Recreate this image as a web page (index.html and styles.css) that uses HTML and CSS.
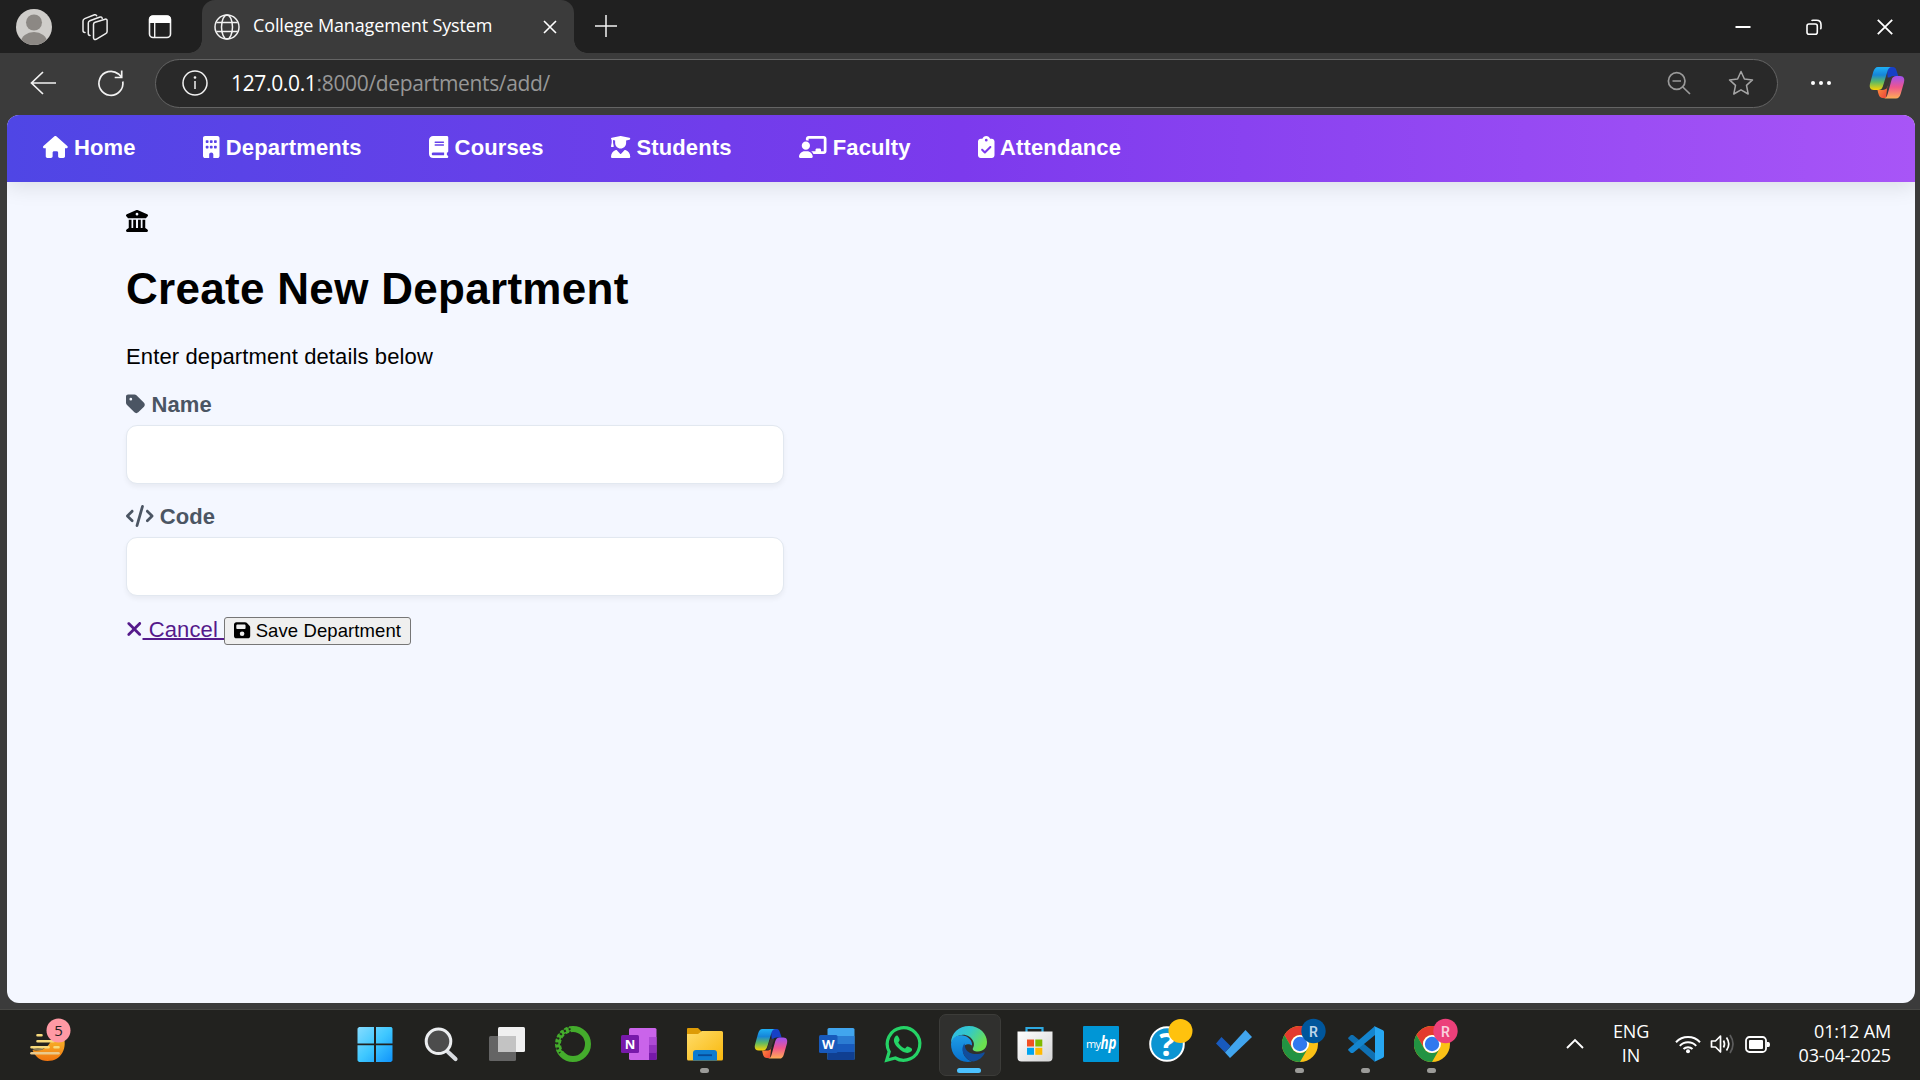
FILE: index.html
```html
<!DOCTYPE html>
<html lang="en">
<head>
<meta charset="utf-8">
<title>College Management System</title>
<link rel="stylesheet" href="styles.css">
</head>
<body>
<svg class="defs" aria-hidden="true">
  <defs>
    <linearGradient id="cpBlue" x1="0" y1="0" x2="0" y2="1"><stop offset="0" stop-color="#1fb0f5"/><stop offset=".35" stop-color="#1685d8"/><stop offset=".65" stop-color="#5fba62"/><stop offset="1" stop-color="#fcd303"/></linearGradient>
    <linearGradient id="cpPink" x1="0" y1="0" x2="0" y2="1"><stop offset="0" stop-color="#9d51f2"/><stop offset=".5" stop-color="#f0568d"/><stop offset="1" stop-color="#ffae55"/></linearGradient>
    <linearGradient id="cpOrange" x1="0" y1="0" x2="1" y2="1"><stop offset="0" stop-color="#ff9a3c"/><stop offset="1" stop-color="#ee3e3a"/></linearGradient>
    <linearGradient id="win" x1="0" y1="0" x2="1" y2="1"><stop offset="0" stop-color="#86dcff"/><stop offset=".5" stop-color="#3fc8ff"/><stop offset="1" stop-color="#0f93fb"/></linearGradient>
    <linearGradient id="folder" x1="0" y1="0" x2="1" y2="1"><stop offset="0" stop-color="#ffdc6a"/><stop offset="1" stop-color="#f9b80c"/></linearGradient>
    <linearGradient id="edgeTop" x1="0" y1="0" x2="1" y2=".5"><stop offset="0" stop-color="#2fb6ee"/><stop offset=".5" stop-color="#34c9c8"/><stop offset="1" stop-color="#6be04f"/></linearGradient>
    <linearGradient id="edgeLeft" x1="0" y1="0" x2="0" y2="1"><stop offset="0" stop-color="#1e9de6"/><stop offset="1" stop-color="#0870cc"/></linearGradient>
    <linearGradient id="sun" x1="0" y1="0" x2="0" y2="1"><stop offset="0" stop-color="#f9c02f"/><stop offset="1" stop-color="#f1750f"/></linearGradient>
    <linearGradient id="bag" x1="0" y1="0" x2="1" y2="1"><stop offset="0" stop-color="#fff"/><stop offset="1" stop-color="#d5d5d5"/></linearGradient>
    <symbol id="copilot" viewBox="0 0 36 34">
      <path d="M18 1h5c4 0 4 2 5.300 6l1 3h-4c-4 0-5.500 1.500-6.500 5z" fill="#1740c6"/>
      <path d="M17 32h-2c-4 0-5-2-5.800-5L8.500 24h4c4 0 5-1 6-5z" fill="url(#cpOrange)"/>
      <path d="M9 1h14c-3 0-4 2-4.800 5L14 20c-1 3-2.500 4-5 4H5c-4 0-5-3-3.800-7l3-11C5.200 3 6.500 1 9 1z" fill="url(#cpBlue)"/>
      <path d="M27 32.500H14c3 0 4-2 4.800-5L22.500 14c1-3 2.500-4 5-4H31c4 0 5 3 3.800 7l-3 10.500C30.800 31 29.500 32.500 27 32.500z" fill="url(#cpPink)"/>
      <path d="M17.500 11.500h4.200l-4.400 11.500h-4z" fill="#3a3733"/>
    </symbol>
    <symbol id="chrome" viewBox="0 0 36 36">
      <circle cx="18" cy="18" r="18" fill="#fbc116"/>
      <path d="M2.400 9A18 18 0 0 1 33.600 9H18a9 9 0 0 0-7.800 13.500z" fill="#e33b2e"/>
      <path d="M2.400 9A18 18 0 0 0 18 36l7.800-13.500A9 9 0 0 1 10.200 22.500z" fill="#229342"/>
      <circle cx="18" cy="18" r="9" fill="#fff"/><circle cx="18" cy="18" r="7.200" fill="#3079ee"/>
    </symbol>
  </defs>
</svg>

<header class="tabstrip">
  <div class="strip-tools">
    <svg class="avatar" viewBox="0 0 36 44"><clipPath id="av"><ellipse cx="18" cy="22" rx="18" ry="18"/></clipPath><g clip-path="url(#av)"><path d="M0 0h36v44H0z" fill="#cfcdca"/><circle cx="18" cy="17.500" r="8" fill="#8c8884"/><ellipse cx="18" cy="37" rx="13" ry="10" fill="#8c8884"/></g></svg>
    <svg class="strip-icon" viewBox="0 0 28 28" fill="none" stroke="#ededed" stroke-width="1.500" stroke-linejoin="round" stroke-linecap="round"><path d="M11.500 11.500c0-1.200.5-1.800 1.600-2.200l10-3.100c1.200-.4 2 .2 2 1.400v11c0 1-.5 1.700-1.400 2l-9.600 5.700c-1.400.6-2.600 0-2.600-1.600z"/><path d="M8 22.500c-1.200 0-1.700-.8-1.700-1.900V10c0-1.200.5-1.900 1.600-2.300L18 4c1.200-.3 2 .3 2.200 1.500"/><path d="M3 19.500C1.800 19.500 1 18.700 1 17.500V8c0-1.200.6-2 1.700-2.400L12.500 1.800c1-.3 1.800 0 2.200 1"/></svg>
    <svg class="strip-icon" viewBox="0 0 28 28"><rect x="3.500" y="3" width="21" height="21.500" rx="3.500" fill="none" stroke="#f2f2f2" stroke-width="1.600"/><path d="M3 10V6.500C3 4 4.500 2.500 7 2.500h14c2.500 0 4 1.500 4 4V10z" fill="#fff"/><path d="M8.700 10v14" stroke="#f2f2f2" stroke-width="1.400"/></svg>
  </div>
  <div class="tab">
    <svg class="globe" viewBox="0 0 26 26" fill="none" stroke="#f2f2f2" stroke-width="1.500"><circle cx="13" cy="13" r="12"/><ellipse cx="13" cy="13" rx="5.500" ry="12"/><path d="M2.500 8.500h21M2.500 17.500h21"/></svg>
    <span class="tab-title">College Management System</span>
    <svg class="tab-close" viewBox="0 0 14 14" stroke="#fff" stroke-width="1.600"><path d="M1 1l12 12M13 1L1 13"/></svg>
  </div>
  <svg class="newtab" viewBox="0 0 22 22" stroke="#f2f2f2" stroke-width="1.500"><path d="M11 0v22M0 11h22"/></svg>
  <div class="window-controls">
    <svg viewBox="0 0 16 16" stroke="#fff" stroke-width="2"><path d="M.5 8h15"/></svg>
    <svg viewBox="0 0 16 16" fill="none" stroke="#fff" stroke-width="1.600"><rect x="1" y="5" width="10.300" height="10.200" rx="2"/><path d="M5.500 1.800Q6 1.200 7 1.200h3.500c3 0 4.500 1.500 4.500 4.500v3q0 1-.7 1.500"/></svg>
    <svg viewBox="0 0 16 16" stroke="#fff" stroke-width="1.800"><path d="M.8.800l14.400 14.400M15.200.8L.8 15.200"/></svg>
  </div>
</header>

<div class="toolbar">
  <svg class="nav-icon" viewBox="0 0 28 28" fill="none" stroke="#f2f2f2" stroke-width="1.700"><path d="M27 14H2.500M14 3L2.500 14 14 25"/></svg>
  <svg class="nav-icon" viewBox="0 0 28 28" fill="none" stroke="#f2f2f2" stroke-width="1.700"><path d="M25.800 12.500A12 12 0 1 1 21.500 5l3 3M24.700 1.500v7h-7"/></svg>
  <div class="address">
    <svg class="info" viewBox="0 0 26 26" fill="none" stroke="#f2f2f2" stroke-width="1.500"><circle cx="13" cy="13" r="12"/><path d="M13 11v8"/><circle cx="13" cy="7.500" r=".6" fill="#fff"/></svg>
    <span class="url"><b>127.0.0.1</b>:8000/departments/add/</span>
    <svg class="zoom-out" viewBox="0 0 24 24" fill="none" stroke="#9a9a9a" stroke-width="1.700"><circle cx="9.700" cy="10" r="8.300"/><path d="M15.800 16l7.200 7M5.500 10h8.500"/></svg>
    <svg class="star" viewBox="0 0 26 26" fill="none" stroke="#a5a5a5" stroke-width="1.500" stroke-linejoin="round"><path d="M13 1.500l3.400 7.500 8.100.9-6 5.500 1.700 8.600L13 19.800 5.800 24l1.700-8.600-6-5.500 8.100-.9z"/></svg>
  </div>
  <svg class="more" viewBox="0 0 20 4" fill="#fff"><circle cx="2" cy="2" r="2"/><circle cx="10" cy="2" r="2"/><circle cx="18" cy="2" r="2"/></svg>
  <svg class="copilot-button"><use href="#copilot"/></svg>
</div>

<div class="viewport">
<div class="page">
  <nav class="navbar">
    <a class="nav-link"><svg class="fa" style="--w:576" viewBox="0 0 576 512"><path d="M575.800 255.500c0 18-15 32.100-32 32.100l-32 0 .7 160.200c0 2.700-.2 5.400-.5 8.100l0 16.200c0 22.100-17.900 40-40 40l-16 0c-1.100 0-2.200 0-3.300-.1c-1.400 .1-2.800 .1-4.200 .1L416 512l-24 0c-22.100 0-40-17.900-40-40l0-24 0-64c0-17.700-14.300-32-32-32l-64 0c-17.700 0-32 14.300-32 32l0 64 0 24c0 22.100-17.900 40-40 40l-24 0-31.900 0c-1.500 0-3-.1-4.500-.2c-1.200 .1-2.400 .2-3.600 .2l-16 0c-22.100 0-40-17.900-40-40l0-112c0-.9 0-1.900 .1-2.800l0-69.700-32 0c-18 0-32-14-32-32.100c0-9 3-17 10-24L266.400 8c7-7 15-8 22-8s15 2 21 7L564.800 231.500c8 7 12 15 11 24z"/></svg> Home</a>
    <a class="nav-link"><svg class="fa" style="--w:384" viewBox="0 0 384 512"><path fill-rule="evenodd" d="M48 0C21.500 0 0 21.500 0 48L0 464c0 26.500 21.500 48 48 48l96 0 0-80c0-26.500 21.500-48 48-48s48 21.500 48 48l0 80 96 0c26.500 0 48-21.500 48-48l0-416c0-26.500-21.500-48-48-48L48 0zM80 96h32q16 0 16 16v32q0 16-16 16H80q-16 0-16-16v-32q0-16 16-16zm96 0h32q16 0 16 16v32q0 16-16 16h-32q-16 0-16-16v-32q0-16 16-16zm96 0h32q16 0 16 16v32q0 16-16 16h-32q-16 0-16-16v-32q0-16 16-16zM80 224h32q16 0 16 16v32q0 16-16 16H80q-16 0-16-16v-32q0-16 16-16zm96 0h32q16 0 16 16v32q0 16-16 16h-32q-16 0-16-16v-32q0-16 16-16zm96 0h32q16 0 16 16v32q0 16-16 16h-32q-16 0-16-16v-32q0-16 16-16z"/></svg> Departments</a>
    <a class="nav-link"><svg class="fa" style="--w:448" viewBox="0 0 448 512"><path d="M96 0C43 0 0 43 0 96L0 416c0 53 43 96 96 96l288 0 32 0c17.700 0 32-14.300 32-32s-14.300-32-32-32l0-64c17.700 0 32-14.300 32-32l0-320c0-17.700-14.300-32-32-32L384 0 96 0zm0 384l256 0 0 64L96 448c-17.700 0-32-14.300-32-32s14.300-32 32-32zm32-240c0-8.800 7.200-16 16-16l192 0c8.800 0 16 7.200 16 16s-7.200 16-16 16l-192 0c-8.800 0-16-7.200-16-16zm16 48l192 0c8.800 0 16 7.200 16 16s-7.200 16-16 16l-192 0c-8.800 0-16-7.200-16-16s7.200-16 16-16z"/></svg> Courses</a>
    <a class="nav-link"><svg class="fa" style="--w:448" viewBox="0 0 448 512"><path d="M219.300 .5c3.100-.6 6.300-.6 9.400 0l200 40C439.900 42.700 448 52.600 448 64s-8.100 21.300-19.300 23.500L352 102.900l0 57.100c0 70.700-57.300 128-128 128s-128-57.300-128-128l0-57.100L48 93.300l0 65.100 15.700 78.400c.9 4.700-.3 9.600-3.300 13.300s-7.600 5.900-12.400 5.900l-32 0c-4.800 0-9.300-2.100-12.400-5.900s-4.300-8.600-3.300-13.300L16 158.400l0-71.800C6.500 83.300 0 74.300 0 64C0 52.600 8.100 42.700 19.300 40.500l200-40zM111.900 327.700c10.500-3.400 21.800 .4 29.400 8.500l71 75.500c6.300 6.700 17 6.700 23.300 0l71-75.500c7.600-8.100 18.900-11.900 29.400-8.500C401 348.600 448 409.400 448 481.300c0 17-13.800 30.700-30.700 30.700L30.700 512C13.800 512 0 498.200 0 481.300c0-71.900 47-132.700 111.900-153.600z"/></svg> Students</a>
    <a class="nav-link"><svg class="fa" style="--w:640" viewBox="0 0 640 512"><path d="M160 64c0-35.300 28.700-64 64-64L576 0c35.300 0 64 28.700 64 64l0 288c0 35.300-28.700 64-64 64l-239.200 0c-11.800-25.500-29.900-47.500-52.400-64l99.600 0 0-32c0-17.700 14.300-32 32-32l64 0c17.700 0 32 14.300 32 32l0 32 64 0 0-288L224 64l0 49.100C205.200 102.200 183.300 96 160 96l0-32zm0 64a96 96 0 1 1 0 192 96 96 0 1 1 0-192zM133.300 352l53.300 0C260.300 352 320 411.700 320 485.300c0 14.700-11.900 26.700-26.700 26.700L26.700 512C11.900 512 0 500.100 0 485.300C0 411.700 59.700 352 133.300 352z"/></svg> Faculty</a>
    <a class="nav-link"><svg class="fa" style="--w:384" viewBox="0 0 384 512"><path d="M192 0c-41.800 0-77.400 26.700-90.500 64L64 64C28.700 64 0 92.700 0 128L0 448c0 35.300 28.700 64 64 64l256 0c35.300 0 64-28.700 64-64l0-320c0-35.300-28.700-64-64-64l-37.500 0C269.400 26.700 233.800 0 192 0zm0 64a32 32 0 1 1 0 64 32 32 0 1 1 0-64zM305 273L177 401c-9.400 9.400-24.600 9.400-33.900 0L79 337c-9.400-9.400-9.400-24.600 0-33.900s24.600-9.400 33.900 0l47 47L271 239c9.400-9.400 24.600-9.400 33.900 0s9.400 24.600 0 33.900z"/></svg> Attendance</a>
  </nav>
  <main class="content">
    <div class="crest"><svg class="fa" style="--w:512" viewBox="0 0 512 512"><path d="M243.400 2.600l-224 96c-14 6-21.800 21-18.700 35.800S16.800 160 32 160l0 8c0 13.300 10.700 24 24 24l400 0c13.300 0 24-10.700 24-24l0-8c15.200 0 28.300-10.700 31.300-25.600s-4.800-29.900-18.700-35.800l-224-96c-8-3.400-17.200-3.400-25.200 0zM128 224l-64 0 0 196.300c-.6 .3-1.200 .7-1.800 1.100l-48 32c-11.700 7.800-17 22.400-12.900 35.900S17.900 512 32 512l448 0c14.100 0 26.500-9.200 30.600-22.700s-1.100-28.100-12.900-35.900l-48-32c-.6-.4-1.200-.7-1.800-1.100L448 224l-64 0 0 192-40 0 0-192-64 0 0 192-48 0 0-192-64 0 0 192-40 0 0-192zM256 64a32 32 0 1 1 0 64 32 32 0 1 1 0-64z"/></svg></div>
    <h1>Create New Department</h1>
    <p class="lead">Enter department details below</p>
    <form>
      <label><svg class="fa" style="--w:448" viewBox="0 0 448 512"><path d="M0 80L0 229.500c0 17 6.700 33.300 18.700 45.300l176 176c25 25 65.500 25 90.500 0L418.700 317.300c25-25 25-65.500 0-90.500l-176-176c-12-12-28.300-18.700-45.300-18.700L48 32C21.500 32 0 53.500 0 80zm112 32a32 32 0 1 1 0 64 32 32 0 1 1 0-64z"/></svg> Name</label>
      <input type="text">
      <label><svg class="fa" style="--w:640" viewBox="0 0 640 512"><path d="M392.800 1.200c-17-4.900-34.700 5-39.600 22l-128 448c-4.900 17 5 34.700 22 39.600s34.700-5 39.600-22l128-448c4.900-17-5-34.700-22-39.600zm80.600 120.100c-12.500 12.500-12.500 32.800 0 45.300L562.700 256l-89.400 89.400c-12.500 12.500-12.500 32.800 0 45.300s32.800 12.500 45.300 0l112-112c12.500-12.500 12.500-32.800 0-45.300l-112-112c-12.500-12.500-32.800-12.500-45.300 0zm-306.700 0c-12.500-12.500-32.800-12.500-45.300 0l-112 112c-12.500 12.500-12.500 32.800 0 45.300l112 112c12.500 12.500 32.800 12.500 45.300 0s12.500-32.800 0-45.300L77.300 256l89.400-89.400c12.500-12.500 12.500-32.800 0-45.300z"/></svg> Code</label>
      <input type="text">
      <div class="actions">
        <a class="cancel"><svg class="fa" style="--w:384" viewBox="0 0 384 512"><path d="M342.600 150.600c12.500-12.500 12.500-32.800 0-45.300s-32.800-12.500-45.300 0L192 210.700 86.600 105.400c-12.500-12.500-32.800-12.500-45.300 0s-12.500 32.800 0 45.300L146.700 256 41.400 361.400c-12.500 12.500-12.500 32.800 0 45.300s32.800 12.500 45.300 0L192 301.300 297.400 406.600c12.500 12.500 32.800 12.500 45.300 0s12.500-32.800 0-45.300L237.300 256 342.600 150.600z"/></svg><span class="cancel-text"> Cancel </span></a><button type="button"><svg class="fa" style="--w:448" viewBox="0 0 448 512"><path d="M64 32C28.700 32 0 60.700 0 96L0 416c0 35.300 28.700 64 64 64l320 0c35.300 0 64-28.700 64-64l0-242.700c0-17-6.700-33.300-18.700-45.300L352 50.700C340 38.700 323.700 32 306.700 32L64 32zm0 96c0-17.700 14.300-32 32-32l192 0c17.700 0 32 14.300 32 32l0 64c0 17.700-14.300 32-32 32L96 224c-17.700 0-32-14.300-32-32l0-64zM224 288a64 64 0 1 1 0 128 64 64 0 1 1 0-128z"/></svg> Save Department</button>
      </div>
    </form>
  </main>
</div>
</div>

<footer class="taskbar">
  <div class="weather">
    <svg viewBox="0 0 36 36"><path d="M19.500 17.500Q22.500 13.500 26 9h7c5 12-1 26-15.500 26C10 35 5 30.500 2.500 24c6 1.500 14-1 17-6.500z" fill="url(#sun)"/><path d="M3 22.500q5 2.500 10 0" stroke="#8d7c52" stroke-width="1.500" fill="none"/><g stroke="#f7da7c" stroke-width="2.600" stroke-linecap="round"><path d="M7.500 9.200h4M7.500 15.200h16M1.500 21.200h17M24.500 21.200h4"/><path d="M1.500 27.200h27" stroke="#eac98c"/></g><circle cx="28.500" cy="4.500" r="12" fill="#ff99a4"/><text x="28.500" y="10" class="count">5</text></svg>
  </div>
  <div class="apps">
    <div class="app"><svg viewBox="0 0 36 36"><path d="M2 1H17v16.500H.5v-15zM19 1h15.500l1 1.500v15H19zM.5 19.200H17V36H2l-1.500-1.500zM19 19.200h16.500v15.300L34 36H19z" fill="url(#win)"/></svg></div>
    <div class="app"><svg viewBox="0 0 36 36"><path d="M25 26l7.500 7" stroke="#d9dce0" stroke-width="4.200" stroke-linecap="round"/><circle cx="15.500" cy="15.300" r="12.300" fill="#4c4c4c" stroke="#eceef0" stroke-width="3"/></svg></div>
    <div class="app"><svg viewBox="0 0 36 36"><rect x="0" y="10" width="27" height="25" rx="1.500" fill="#646464"/><rect x="9" y="1" width="27" height="25" rx="1.500" fill="#f0f0f0"/><path d="M9 10h18v16H9z" fill="#c3c3c3"/></svg></div>
    <div class="app"><svg viewBox="0 0 36 36" fill="none"><circle cx="18" cy="18" r="15" stroke="#44ac2c" stroke-width="6"/><path d="M15.500 3A15.300 15.300 0 0 0 5 27" stroke="#23241f" stroke-width="2.200" stroke-dasharray="2 3"/><path d="M14 .5A18 18 0 0 0 2 26M16 6A12 12 0 0 0 8 25" stroke="#23241f" stroke-width="1.500" stroke-dasharray="2 3.500"/></svg></div>
    <div class="app"><svg viewBox="0 0 36 36"><rect x="8" y="2" width="27.500" height="32" rx="1.500" fill="#ca64ea"/><path d="M28 11h7.500v8H28z" fill="#ae4bd5"/><path d="M28 19h7.500v7.500H28z" fill="#9332bf"/><path d="M28 26.500h7.500V34H28z" fill="#7719aa"/><rect y="9" width="18" height="18" rx="1.500" fill="#7719aa"/><text x="9" y="22.800" class="tile-letter">N</text></svg></div>
    <div class="app"><svg viewBox="0 0 36 36"><path d="M0 3q0-1 1-1h10l4 4v4H0z" fill="#dd9b06"/><path d="M0 8h11l4-3h19.500q1.500 0 1.500 1.500V33q0 1.500-1.500 1.500h-33Q0 34.500 0 33z" fill="url(#folder)"/><path d="M6 34.500V27q0-3 3-3h18q3 0 3 3v7.500z" fill="#0d7bd0"/><path d="M11 29.200h14" stroke="#084a96" stroke-width="1.800"/></svg><i class="dot"></i></div>
    <div class="app"><svg viewBox="0 0 36 36"><use href="#copilot" width="34" height="32" x="1" y="2"/></svg></div>
    <div class="app"><svg viewBox="0 0 36 36"><rect x="8.500" y="2" width="27" height="32" rx="1.500" fill="#41a5ee"/><path d="M8.500 10h27v8h-27z" fill="#2b7cd3"/><path d="M8.500 18h27v8h-27z" fill="#185abd"/><path d="M8.500 26h27v8h-27z" fill="#103f91"/><rect y="9" width="18.500" height="18" rx="1.500" fill="#1859bb"/><text x="9.200" y="22.800" class="tile-letter">W</text></svg></div>
    <div class="app"><svg viewBox="0 0 36 36"><path d="M1.700 34.300l2.500-8.600A16.300 16.300 0 1 1 10.300 32z" fill="none" stroke="#25d366" stroke-width="3.200"/><path d="M12.600 9.800c-.6-.6-1.300-.5-1.900.1-3.500 3.700-1.600 8 2.800 12.400s9 6 12.500 3.300c1-.8 1.300-2 .9-2.800-.3-.7-3-2-4-2.300-.8-.2-1.200 0-1.700.7-.8 1-1.200 1.500-2 1.100-2.400-1-4.500-3-5.700-5.200-.4-.8 0-1.200.8-2.200.4-.5.400-1 .2-1.600-.4-1-1.200-2.900-1.900-3.500z" fill="#25d366"/></svg></div>
    <div class="app active"><svg viewBox="0 0 36 36"><path d="M0 17C0 7 8 0 18 0c11 0 18 8 18 16 0 6-4 9.500-9 9.500-4 0-6-1.500-5-3.500 2-3 1-8.500-4-11.500C12 7 4 9 0 17z" fill="url(#edgeTop)"/><path d="M0 18C1 11 7 8.500 12 9.500c6 1 9.500 5.500 9 10-3-2-8-2-9 3-.8 6 3 11 9 13C8 38 0 29 0 18z" fill="url(#edgeLeft)"/><path d="M13.500 17.500c-3.500 4-2.500 10.500 2.500 15 2 1.800 4 2.800 6.500 3 5-1 9-4 11-8 .5-1-.2-1.400-1-1-7 3.200-15.500 1.500-18-4-.7-2-.8-3.500-1-5z" fill="#114d9b"/></svg><i class="dot"></i></div>
    <div class="app"><svg viewBox="0 0 36 36"><path d="M9.500 8V2h16v6" fill="none" stroke="#2ea9e0" stroke-width="2.200"/><path d="M.5 5.500h35v26q0 4-4 4h-27q-4 0-4-4z" fill="url(#bag)"/><path d="M10 13.500h7v7h-7z" fill="#f25022"/><path d="M18.300 13.500h7v7h-7z" fill="#7fba00"/><path d="M10 21.800h7v7h-7z" fill="#00a4ef"/><path d="M18.300 21.800h7v7h-7z" fill="#ffb900"/></svg></div>
    <div class="app"><svg viewBox="0 0 36 36"><rect width="36" height="36" rx="1" fill="#0096d6"/><text x="3" y="21.500" class="my" textLength="15">my</text><text x="17.500" y="22.500" class="hp" textLength="16" lengthAdjust="spacingAndGlyphs">hp</text></svg></div>
    <div class="app"><svg viewBox="0 0 36 36"><circle cx="18" cy="18" r="16.800" fill="#0c94d2" stroke="#fff" stroke-width="2"/><text x="18" y="30" class="help">?</text><circle cx="31.500" cy="5" r="12" fill="#ffc20e"/></svg></div>
    <div class="app"><svg viewBox="0 0 36 36"><path d="M0 17.500L5.500 11 14.500 20 9 26.500z" fill="#185abd"/><path d="M9 26.500L29.500 4 36 11 14 32z" fill="#41a5ee"/></svg></div>
    <div class="app"><svg viewBox="0 0 36 36"><use href="#chrome"/><circle cx="31.500" cy="5" r="12.200" fill="#00569c"/><text x="31.500" y="10.500" class="badge-letter">R</text></svg><i class="dot"></i></div>
    <div class="app"><svg viewBox="0 0 36 36"><path d="M0 12l3-3h2l22 18v9L.5 13z" fill="#0f70b3"/><path d="M0 24l3 3h2l22-18V0L.5 23z" fill="#1485cf"/><path d="M26 0l9 4.200q1 .5 1 1.800v24q0 1.300-1 1.800L26 36c1 0 1-1 1-2V2q0-1.500-1-2z" fill="#27a7f2"/></svg><i class="dot"></i></div>
    <div class="app"><svg viewBox="0 0 36 36"><use href="#chrome"/><circle cx="31.500" cy="5" r="12.200" fill="#ec407a"/><text x="31.500" y="10.500" class="badge-letter pale">R</text></svg><i class="dot"></i></div>
  </div>
  <div class="tray">
    <svg class="chevron" viewBox="0 0 18 10" fill="none" stroke="#fff" stroke-width="1.900"><path d="M1 9l8-8 8 8"/></svg>
    <div class="lang">ENG<br>IN</div>
    <div class="status">
      <svg width="26" height="20" viewBox="0 0 26 20" fill="none" stroke="#fff" stroke-width="2"><path d="M1 8.200a16.500 16.500 0 0 1 24 0M4.800 11.900a11.300 11.300 0 0 1 16.400 0M8.500 15a6.500 6.500 0 0 1 9 0"/><circle cx="13" cy="17.200" r="2" fill="#fff" stroke="none"/></svg>
      <svg width="26" height="20" viewBox="0 0 26 20" fill="none" stroke="#fff" stroke-width="1.700" stroke-linejoin="round"><path d="M1.500 7v6h4l5 5V2l-5 5z"/><path d="M13.500 6.500q2 3.500 0 7M16.500 3.500q4.500 6.500 0 13"/><path d="M20 1q6 9 0 18" stroke="#5c5c5c"/></svg>
      <svg width="26" height="20" viewBox="0 0 26 20"><rect x="1" y="3" width="20" height="15" rx="3.500" fill="none" stroke="#fff" stroke-width="1.800"/><rect x="4" y="6" width="14" height="9" rx="1" fill="#fff"/><path d="M22 8h1.500q1.500 0 1.500 2.500T23.500 13H22z" fill="#fff"/></svg>
    </div>
    <div class="clock">01:12 AM<br>03-04-2025</div>
  </div>
</footer>
</body>
</html>
```
FILE: styles.css
```css
* { box-sizing: border-box; }
body {
  margin: 0;
  width: 1920px;
  height: 1080px;
  overflow: hidden;
  display: flex;
  flex-direction: column;
  background: #3b3b3b;
  font-family: "Open Sans", "Noto Sans", sans-serif;
  color: #fff;
}
svg { display: block; flex: none; overflow: visible; }
.defs { position: absolute; width: 0; height: 0; }

/* Tab strip */
.tabstrip { height: 53px; flex: none; display: flex; background: #202020; }
.strip-tools { width: 202px; display: flex; align-items: center; padding: 0 0 0 16px; }
.avatar { width: 36px; height: 44px; }
.strip-icon { width: 28px; height: 28px; margin-left: 30px; }
.strip-icon + .strip-icon { margin-left: 36px; }
.tab {
  width: 372px;
  display: flex;
  align-items: center;
  padding: 0 17px 0 12px;
  background: #3b3b3b;
  border-radius: 13px 13px 0 0;
  position: relative;
}
.tab::before, .tab::after {
  content: "";
  position: absolute;
  bottom: 0;
  width: 13px;
  height: 13px;
}
.tab::before { left: -13px; background: radial-gradient(circle at 0 0, #202020 12.500px, #3b3b3b 13px); }
.tab::after { right: -13px; background: radial-gradient(circle at 100% 0, #202020 12.500px, #3b3b3b 13px); }
.globe { width: 26px; height: 26px; }
.tab-title { flex: 1; margin-left: 13px; font-size: 18px; letter-spacing: -0.130px; white-space: nowrap; line-height: 50px; padding-bottom: 4px; }
.tab-close { width: 14px; height: 14px; }
.newtab { width: 22px; height: 22px; margin: 15px 0 0 21px; }
.window-controls { margin-left: auto; display: flex; align-items: center; gap: 55px; padding-right: 27px; }
.window-controls svg { width: 16px; height: 16px; }

/* Toolbar */
.toolbar { height: 62px; flex: none; display: flex; align-items: center; padding: 0 15px 2px 29px; }
.nav-icon { width: 28px; height: 28px; }
.nav-icon + .nav-icon { margin-left: 40px; }
.address {
  width: 1623px;
  height: 49px;
  margin-left: 30px;
  display: flex;
  align-items: center;
  padding: 0 23px 0 26px;
  border: 1.500px solid #646464;
  border-radius: 25px;
  background: #292929;
}
.info { width: 26px; height: 26px; }
.url { flex: 1; margin-left: 23px; font-size: 21px; letter-spacing: -0.340px; color: #979797; white-space: nowrap; }
.url b { font-weight: 400; color: #fff; }
.zoom-out { width: 24px; height: 24px; margin-right: 37px; }
.star { width: 26px; height: 26px; }
.more { width: 20px; height: 4px; margin-left: 33px; }
.copilot-button { width: 36px; height: 34px; margin-left: auto; }

/* Page */
.viewport { height: 895px; flex: none; padding: 0 5px 6px 7px; border-bottom: 1px solid #474744; }
.page {
  height: 888px;
  overflow: hidden;
  border-radius: 12px;
  background: #f4f7ff;
  font-family: "Liberation Sans", Arial, sans-serif;
  font-size: 22px;
  letter-spacing: 0.120px;
  color: #000;
}
.fa {
  display: inline-block;
  height: 1em;
  width: calc(var(--w) / 512 * 1em);
  vertical-align: -0.125em;
  fill: currentColor;
}
.navbar {
  height: 67px;
  display: flex;
  gap: 67.500px;
  padding: 18px 0 0 36px;
  background: linear-gradient(90deg, #4f46e5, #7c3aed 50%, #a855f7);
  box-shadow: 0 5px 20px rgba(0, 0, 0, 0.1);
  color: #fff;
  font-weight: 700;
  line-height: 30px;
  white-space: nowrap;
}
.content { padding: 25px 0 0 119px; line-height: 30px; }
.crest { height: 30px; }
h1 { margin: 27px 0 0; font-size: 44px; line-height: 50px; letter-spacing: 0.300px; }
.lead { margin: 28px 0 0; }
form { width: 658px; }
label { display: block; margin-top: 17px; height: 36px; font-weight: 700; color: #4b5563; }
input {
  display: block;
  width: 100%;
  height: 59px;
  border: 1.350px solid #e2e8f0;
  border-radius: 11px;
  background: #fff;
  box-shadow: 0 3px 5px rgba(0, 0, 0, 0.05);
}
label + input { margin-top: 0; }
label { padding-top: 1px; }
.actions { display: flex; margin-top: 18px; white-space: pre; }
.cancel { margin-top: 1px; color: #551a8b; }
.cancel-text { text-decoration: underline; text-decoration-thickness: 2px; }
button {
  width: 187px;
  height: 28px;
  margin-top: 3px;
  padding: 0;
  border: 1.300px solid #767676;
  border-radius: 3px;
  background: #efefef;
  font-family: inherit;
  font-size: 18.500px;
  line-height: 24px;
  letter-spacing: 0.100px;
  color: #000;
}

/* Taskbar */
.taskbar {
  height: 70px;
  flex: none;
  display: grid;
  grid-template-columns: 341.500px 1123.500px 1fr;
  background: #22221f;
}
.weather { padding: 16px 0 0 30px; }
.weather svg { width: 36px; height: 36px; }
.apps { display: flex; }
.app { width: 66.080px; display: flex; flex-direction: column; align-items: center; padding-top: 16px; position: relative; }
.app > svg { width: 36px; height: 36px; z-index: 1; }
.dot { width: 9px; height: 5px; margin-top: 6px; border-radius: 3px; background: #9b9b98; z-index: 1; }
.active::before {
  content: "";
  position: absolute;
  left: 3px;
  top: 4px;
  width: 60px;
  height: 60px;
  border: 1px solid #3c3c39;
  border-radius: 7px;
  background: #30302e;
}
.active .dot { width: 24px; background: #4cc2ff; }
text { text-anchor: middle; }
.count { font-size: 15px; fill: #222; }
.tile-letter { font: 700 13px "Open Sans", sans-serif; fill: #fff; }
.badge-letter { font: 600 14px Roboto, sans-serif; fill: #bdd5ea; }
.pale { fill: #f9cfdd; }
.my { font-size: 11px; fill: #fff; text-anchor: start; }
.hp { font: italic 700 18px "Open Sans", sans-serif; fill: #fff; text-anchor: start; }
.help { font: 700 33px "Open Sans", sans-serif; fill: #fff; }
.tray { display: flex; align-items: center; padding: 0 29px 3px 101px; font-size: 18px; line-height: 23.500px; letter-spacing: -0.150px; }
.chevron { width: 18px; height: 10px; }
.lang { width: 60px; margin-left: 17px; text-align: center; }
.status { display: flex; gap: 9px; margin-left: 14px; }
.clock { margin-left: auto; text-align: right; white-space: nowrap; }
```
